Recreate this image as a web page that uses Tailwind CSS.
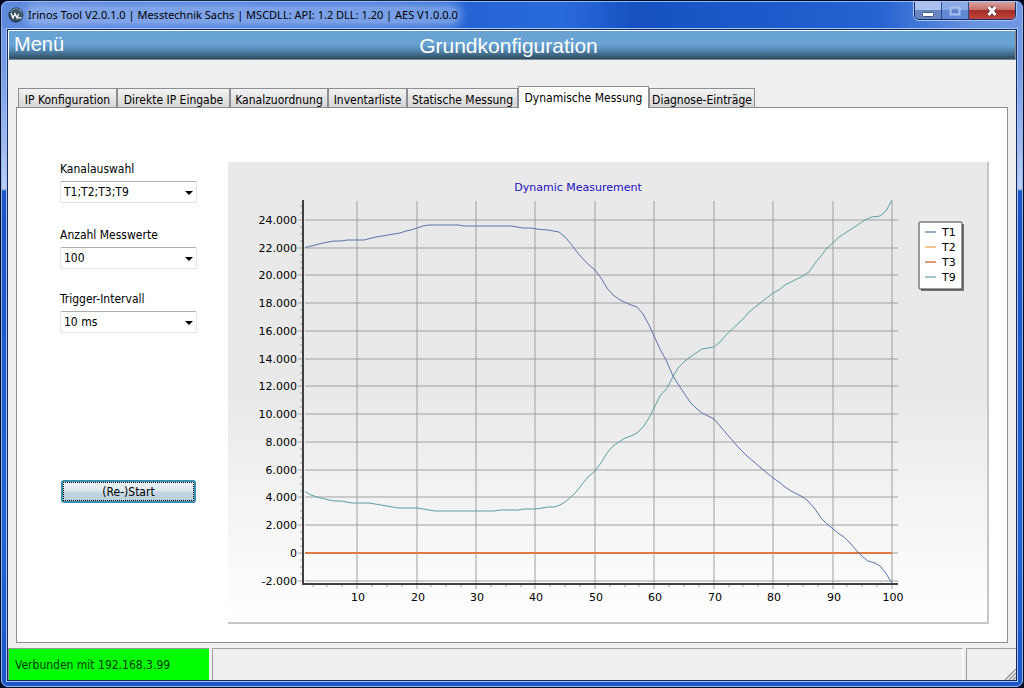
<!DOCTYPE html>
<html lang="de">
<head>
<meta charset="utf-8">
<title>Irinos Tool</title>
<script src="https://cdn.jsdelivr.net/npm/@tailwindcss/browser@4"></script>
</head>
<body class="bg-[#04091f] font-['DejaVu_Sans_Condensed','DejaVu_Sans',sans-serif] text-[12px] text-black">
<div class="flex min-h-screen flex-col rounded-lg border border-[#020a24] bg-[linear-gradient(180deg,#6f9ae6_0px,#7397e2_60px,#b9cef5_188px,#1a55c4_190px,#2262d2_520px,#1b58c6_100%)]">
 <div class="flex flex-1 flex-col rounded-[7px] border border-[#8fb8f4] px-1 pb-1">

  <!-- Title bar -->
  <header class="-mx-1 flex h-[26px] items-start rounded-t-md bg-[linear-gradient(90deg,#5f8bde_0%,#4a7cdc_10%,#3d72d9_38%,#2464d3_46%,#2a6bdc_55%,#1552c0_62%,#1c5acb_74%,#2563d0_86%,#6992df_95%,#7198e2_100%)] pl-[6px]">
   <div class="flex h-[26px] flex-1 items-center gap-1">
    <svg class="size-4 shrink-0" viewBox="0 0 16 16" aria-hidden="true">
     <circle cx="8" cy="8" r="7" fill="#35505f" stroke="#1b2c3a"/>
     <path d="M2.5 5 A6.3 6.3 0 0 1 13.5 5" fill="none" stroke="#7f9aa8" stroke-width="1.2"/>
     <path d="M3 6 L5 11 L7 6.500 L9 11 L10.500 7 M10 10.800 H13.500" fill="none" stroke="#fff" stroke-width="1.300"/>
    </svg>
    <h1 class="rounded-full bg-[#b4cbf6]/50 font-['Noto_Sans',sans-serif] text-[11px] leading-4 whitespace-nowrap shadow-[0_0_8px_4px_rgba(180,203,246,0.5)]">Irinos Tool V2.0.1.0 | Messtechnik Sachs | MSCDLL: API: 1.2 DLL: 1.20 | AES V1.0.0.0</h1>
   </div>
   <div class="mr-[6px] flex h-[18px] rounded-b-[5px] border border-t-0 border-[#16306e] shadow-[0_0_0_1px_#a9c4f4]">
    <button type="button" aria-label="Minimieren" class="flex w-[27px] items-center justify-center rounded-bl border-r border-[#2b4b90] bg-linear-to-b from-[#a9c1ec] from-45% to-[#6686c4] to-50%">
     <svg class="h-3 w-3" viewBox="0 0 12 12"><rect x="0.500" y="7.500" width="11" height="4" rx="1" fill="#fff" stroke="#48577a"/></svg>
    </button>
    <button type="button" aria-label="Maximieren" class="flex w-[27px] items-center justify-center border-r border-[#2b4b90] bg-linear-to-b from-[#8cabe6] from-45% to-[#6389d6] to-50%">
     <svg class="h-3 w-3" viewBox="0 0 12 12"><rect x="1.500" y="2.500" width="9" height="7" fill="none" stroke="#a9c0ec" stroke-width="2"/><rect x="4" y="5" width="4" height="2" fill="none" stroke="#5b7dc2"/></svg>
    </button>
    <button type="button" aria-label="Schließen" class="flex w-[46px] items-center justify-center rounded-br bg-[linear-gradient(180deg,#d8a09c_0%,#c9706a_45%,#a52c28_50%,#c0473c_100%)]">
     <svg class="h-3 w-3" viewBox="0 0 12 12"><path d="M2.500 2 L9.500 10 M9.500 2 L2.500 10" stroke="#5a3540" stroke-width="4.500"/><path d="M2.500 2 L9.500 10 M9.500 2 L2.500 10" stroke="#fff" stroke-width="2.800"/></svg>
    </button>
   </div>
  </header>

  <main class="flex flex-1 flex-col border border-[#a4c3f6]">
   <div class="flex flex-1 flex-col border border-[#10275c] bg-[#efefef]">

    <nav class="relative flex h-[30px] items-center justify-center border border-t-white border-r-[#8a8a8a] border-b-[#7d8a94] border-l-white bg-[linear-gradient(180deg,#68a3d3_0%,#68a3d3_48%,#5489b2_68%,#2f4a5f_100%)] pt-px pr-[7px] font-['Liberation_Sans',sans-serif] text-[20px] leading-6 text-white">
     <button type="button" class="absolute left-[5px] -mt-1">Menü</button>
     <h2 class="text-[21px]">Grundkonfiguration</h2>
    </nav>

    <!-- Tabs -->
    <div role="tablist" class="mx-[10px] mt-[26px] flex h-[21px] items-end whitespace-nowrap">
     <button type="button" role="tab" class="h-[19px] w-[99px] border border-b-0 border-[#8c8e94] bg-linear-to-b from-[#f3f3f3] to-[#d6d6d6] pt-0.5">IP Konfiguration</button>
     <button type="button" role="tab" class="h-[19px] w-[113px] border border-b-0 border-[#8c8e94] bg-linear-to-b from-[#f3f3f3] to-[#d6d6d6] pt-0.5">Direkte IP Eingabe</button>
     <button type="button" role="tab" class="h-[19px] w-[98px] border border-b-0 border-[#8c8e94] bg-linear-to-b from-[#f3f3f3] to-[#d6d6d6] pt-0.5">Kanalzuordnung</button>
     <button type="button" role="tab" class="h-[19px] w-[79px] border border-b-0 border-[#8c8e94] bg-linear-to-b from-[#f3f3f3] to-[#d6d6d6] pt-0.5">Inventarliste</button>
     <button type="button" role="tab" class="h-[19px] w-[111px] border border-b-0 border-[#8c8e94] bg-linear-to-b from-[#f3f3f3] to-[#d6d6d6] pt-0.5">Statische Messung</button>
     <button type="button" role="tab" aria-selected="true" class="z-10 -mb-px h-[22px] w-[131px] border border-b-0 border-[#8c8e94] bg-white">Dynamische Messung</button>
     <button type="button" role="tab" class="h-[19px] w-[106px] border border-b-0 border-[#8c8e94] bg-linear-to-b from-[#f3f3f3] to-[#d6d6d6] pt-0.5">Diagnose-Einträge</button>
    </div>

    <section role="tabpanel" class="mx-2 mb-[5px] flex flex-1 border border-[#8c8e94] bg-white pr-[18px] pb-[18px] pl-[43px]">
     <form class="mr-[31px] flex w-[137px] shrink-0 flex-col pt-[53px]">
      <label for="kanal" class="leading-4">Kanalauswahl</label>
      <div class="relative mt-1">
       <select id="kanal" class="h-[22px] w-full appearance-none rounded-xs border border-[#dfe2e6] border-t-[#abadb3] bg-white pl-[3px]"><option>T1;T2;T3;T9</option></select>
       <svg class="pointer-events-none absolute top-[10px] right-1 h-1 w-2" viewBox="0 0 8 4"><path d="M0 0H8L4 4Z"/></svg>
      </div>
      <label for="anzahl" class="mt-6 leading-4">Anzahl Messwerte</label>
      <div class="relative mt-1">
       <select id="anzahl" class="h-[22px] w-full appearance-none rounded-xs border border-[#dfe2e6] border-t-[#abadb3] bg-white pl-[3px]"><option>100</option></select>
       <svg class="pointer-events-none absolute top-[10px] right-1 h-1 w-2" viewBox="0 0 8 4"><path d="M0 0H8L4 4Z"/></svg>
      </div>
      <label for="intervall" class="mt-[22px] leading-4">Trigger-Intervall</label>
      <div class="relative mt-1">
       <select id="intervall" class="h-[22px] w-full appearance-none rounded-xs border border-[#dfe2e6] border-t-[#abadb3] bg-white pl-[3px]"><option>10 ms</option></select>
       <svg class="pointer-events-none absolute top-[10px] right-1 h-1 w-2" viewBox="0 0 8 4"><path d="M0 0H8L4 4Z"/></svg>
      </div>
      <button type="button" class="mt-[147px] mr-px ml-px h-[23px] rounded-[3px] border-2 border-[#3a8fb0] bg-[linear-gradient(180deg,#eaf1f5_0%,#dce8ee_48%,#c5d7e1_52%,#b9d0dc_100%)] p-0 leading-none">
       <span class="flex h-full items-center justify-center border border-dotted border-black">(Re-)Start</span>
      </button>
     </form>

     <figure class="mt-[54px] flex min-w-0 flex-1 border-r-2 border-b-2 border-[#c6c6c6] bg-[linear-gradient(180deg,#e9e9e9_0%,#e9e9e9_50%,#ffffff_100%)]">
      <svg id="chart" class="h-full w-full font-['DejaVu_Sans',sans-serif] text-[11px]" viewBox="228 162 759 460" role="img" aria-label="Dynamic Measurement">
       <text x="578" y="191" text-anchor="middle" fill="#1a0dc0">Dynamic Measurement</text>
       <g id="grid"></g>
       <path d="M303 200V583M302 584H898" stroke="#404040" stroke-width="2" fill="none"/>
       <g fill="none">
        <path d="M305 553H892" stroke="#e07a45" stroke-width="2"/>
        <polyline stroke="#5a74ac" points="305,247.500 311,246 317,244.500 323,243 334,241 341,241 347,240 364,240 370,238.500 376,237 400,233 406,231 411,230 423,226 429,225 458,225 464,226 511,226 523,228 530,228 541,229.500 548,230 559,232 565,237 571,244 577,252 583,259 589,265 595,270 601,278 607,288 613,295 620,300 631,305 637,307 643,314 649,325 655,338 660,349 666,360 673,376 678,384 684,393 690,402 696,408 702,413 714,419 720,426 726,433 738,447 747,456 773,478 779,482 785,487 791,491 803,497 808,501 815,509 821,518 827,524 838,533 845,538 850,543 856,550 863,557 868,561 875,563 880,566 885,572 892,583"/>
        <polyline stroke="#5b9ea6" points="305,491.500 311,495 317,497 323,498.500 329,500 335,501 341,501 352,503 369,503 375,504 399,508 417,508 435,511 494,511 500,510 518,510 524,509 536,509 548,507 554,507 560,505 565,502 571,497 577,491 583,483 589,476 595,471 601,463 607,453 613,446 619,442 625,438 631,436 637,433 643,427 649,418 654,408 660,396 667,388 673,376.500 678,368 684,362 690,357 696,353 702,349 714,347 720,342 726,335 743,319 749,312 764,300 773,293 779,290 785,285 803,276 809,272 815,263 821,256 827,248 833,243 839,237 850,230 865,220 872,217 880,216 886,211 892,200"/>
       </g>
       <rect x="921" y="224" width="43" height="67" fill="#777"/>
       <rect x="919" y="222" width="43" height="67" rx="1" fill="#fff" stroke="#404040"/>
       <g stroke-width="2">
        <path d="M925 232H936" stroke="#9aaccb"/><path d="M925 247H936" stroke="#f2c894"/>
        <path d="M925 262H936" stroke="#e49a7c"/><path d="M925 277H936" stroke="#a5c5c9"/>
       </g>
       <text x="942" y="236">T1</text><text x="942" y="251">T2</text><text x="942" y="266">T3</text><text x="942" y="281">T9</text>
      </svg>
     </figure>
    </section>

    <footer class="flex h-8 gap-[3px]">
     <div class="flex w-[201px] items-center border-t border-l border-[#8f9a8f] bg-[#00ff00] pl-[6px] text-[#063a06]">Verbunden mit 192.168.3.99</div>
     <div class="flex-1 border-t border-l border-t-[#a0a0a0] border-l-[#a0a0a0] border-r border-r-white"></div>
     <div class="flex w-[50px] items-end justify-end border-t border-l border-[#a0a0a0]">
      <svg class="size-3" viewBox="0 0 12 12"><path d="M1 12L12 1M5 12L12 5M9 12L12 9" stroke="#999" stroke-width="1.500"/></svg>
     </div>
    </footer>
   </div>
  </main>
 </div>
</div>
<script>
const grid = document.getElementById('grid');
const add = (tag, attrs, text) => {
  const el = document.createElementNS('http://www.w3.org/2000/svg', tag);
  for (const k in attrs) el.setAttribute(k, attrs[k]);
  if (text) el.textContent = text;
  grid.appendChild(el);
};
const line = (d) => add('path', { d, stroke: '#a0a0a0', 'stroke-opacity': 0.5, 'stroke-width': 2 });
// Value axis: -2.000 to 24.000, three small ticks between labels
for (let v = -2; v <= 24; v += 2) {
  const y = Math.round(553 - v * 13.88);
  line(`M298 ${y}H302M305 ${y}H898`);
  add('text', { x: 297, y: y + 4, 'text-anchor': 'end' }, v ? v + '.000' : '0');
}
for (let v = -2; v <= 25; v += 0.5) {
  if (v % 2) line(`M300 ${Math.round(553 - v * 13.88)}H302`);
}
// Sample axis: 10 to 100
for (let n = 10; n <= 100; n += 10) {
  const x = Math.round(297.7 + n * 5.943);
  line(`M${x} 201V583M${x} 585V589`);
  add('text', { x: x + 1, y: 601, 'text-anchor': 'middle' }, String(n));
}
for (let n = 2.5; n < 100; n += 2.5) {
  if (n % 10) line(`M${Math.round(297.7 + n * 5.943)} 585V587`);
}
</script>
</body>
</html>
